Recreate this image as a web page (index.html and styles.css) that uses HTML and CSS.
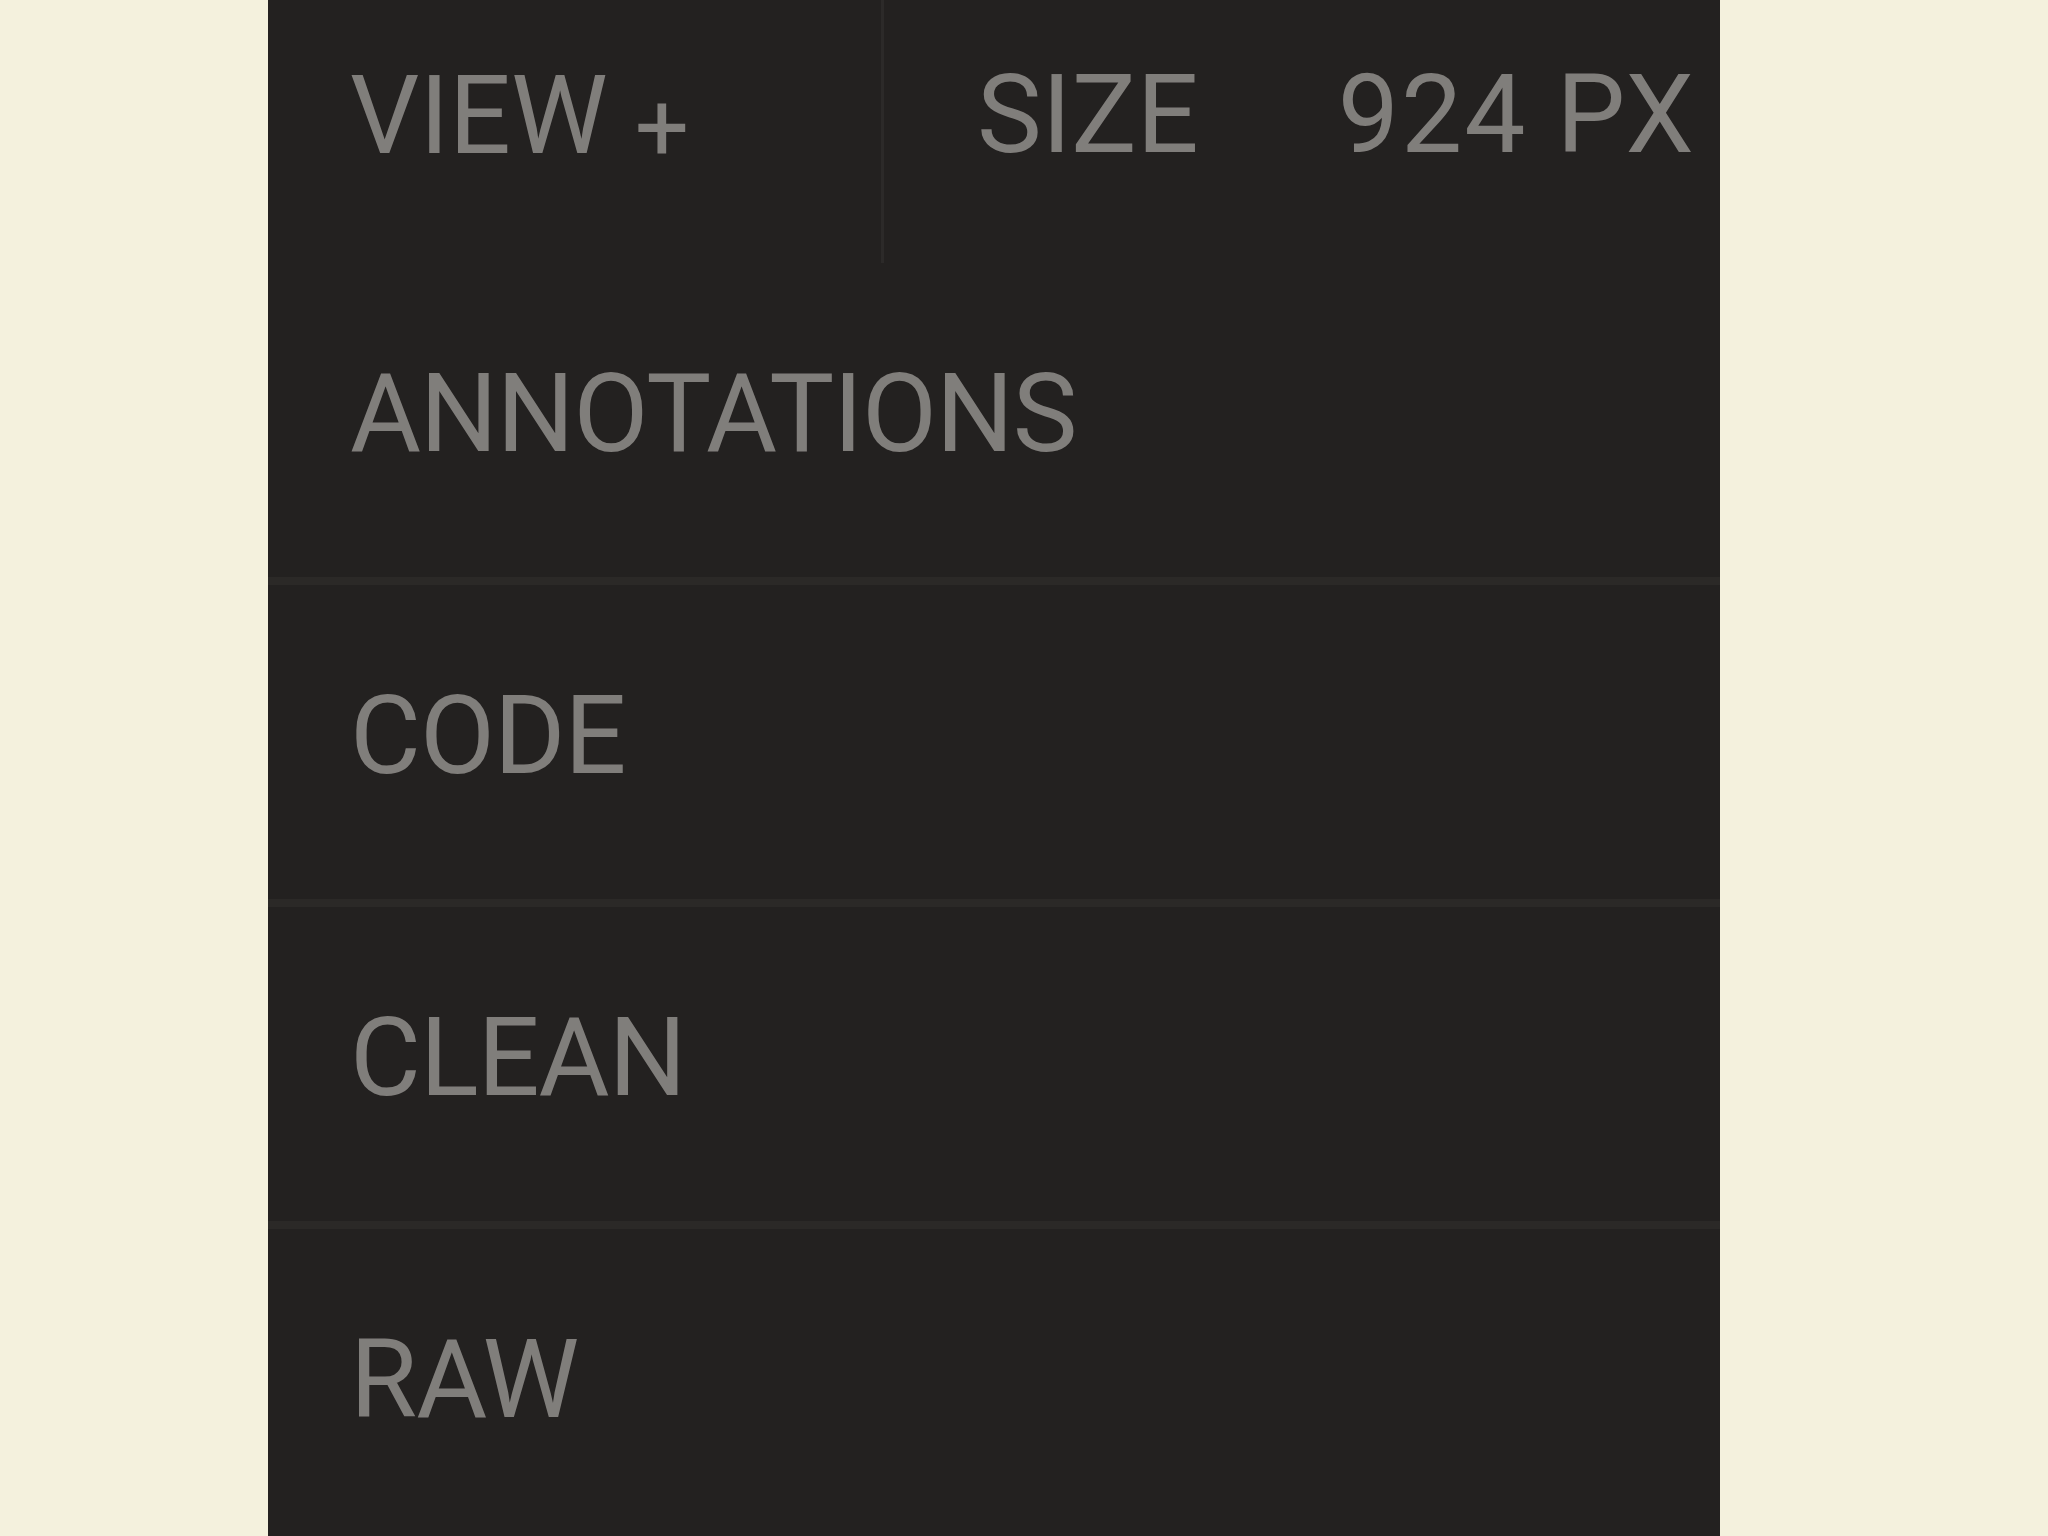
FILE: index.html
```html
<!DOCTYPE html>
<html lang="en">
<head>
<meta charset="utf-8">
<title>View menu</title>
<link rel="stylesheet" href="styles.css">
</head>
<body>
<div class="panel">
  <header class="bar">
    <div class="view">VIEW <span class="plus">+</span></div>
    <div class="size"><span class="size-label">SIZE</span><span class="size-value">924 PX</span></div>
  </header>
  <ul class="menu">
    <li class="menu-item">ANNOTATIONS</li>
    <li class="menu-item">CODE</li>
    <li class="menu-item">CLEAN</li>
    <li class="menu-item">RAW</li>
  </ul>
</div>
</body>
</html>
```

FILE: styles.css
```css
html, body {
  margin: 0;
  padding: 0;
}

body {
  background: #f4f1dd;
  font-family: Roboto, "Liberation Sans", Arial, sans-serif;
}

.panel {
  margin-left: 268px;
  width: 1452px;
  min-height: 1536px;
  background: #232120;
  color: #807e7b;
  font-size: 109px;
  line-height: 1;
  white-space: nowrap;
  display: flex;
  flex-direction: column;
}

.bar {
  display: flex;
  height: 263px;
  flex: none;
}

.view {
  box-sizing: border-box;
  width: 616px;
  padding: 62px 0 0 82px;
  border-right: 3px solid #2c2a29;
}

.plus {
  font-size: 96px;
  vertical-align: -8px;
}

.size {
  display: flex;
  gap: 139px;
  padding: 61px 0 0 93px;
}

.size-value {
  letter-spacing: 2px;
}

.menu {
  list-style: none;
  margin: 0;
  padding: 0;
  flex: 1;
  display: flex;
  flex-direction: column;
}

.menu-item {
  box-sizing: border-box;
  height: 322px;
  padding: 97px 0 0 82px;
  letter-spacing: -1px;
  border-bottom: 8px solid #2b2927;
}

.menu-item:last-child {
  border-bottom: none;
  flex: 1;
}
```
